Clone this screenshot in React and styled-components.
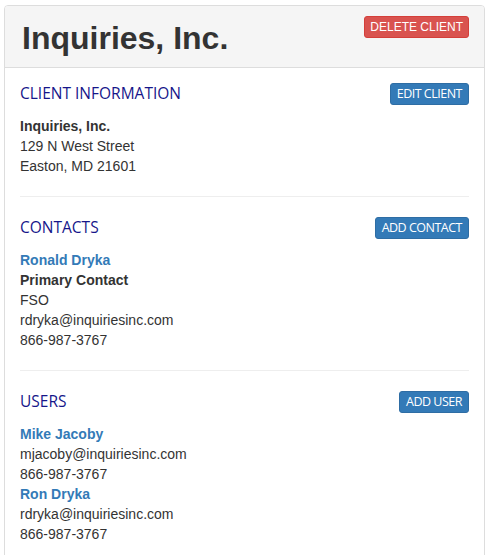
import styled, { createGlobalStyle } from "styled-components";

const GlobalStyle = createGlobalStyle`
  html, body {
    margin: 0;
    padding: 0;
    overflow: hidden;
    background: #fff;
  }
  body {
    font-family: "Liberation Sans", Arial, sans-serif;
    font-size: 14px;
    line-height: 20px;
    color: #333;
  }
`;

const Panel = styled.div`
  margin: 5px 8px 0 4px;
  border: 1px solid #ddd;
  border-radius: 4px;
  background: #fff;
`;

const PanelHeading = styled.div`
  display: flex;
  justify-content: space-between;
  align-items: flex-start;
  padding: 10px 15px;
  background: #f5f5f5;
  border-bottom: 1px solid #ddd;
  border-radius: 3px 3px 0 0;
`;

const Title = styled.h1`
  margin: 6px 0 3px 2px;
  font-size: 32px;
  line-height: 32px;
  font-weight: bold;
  color: #333;
`;

const PanelBody = styled.div`
  padding: 15px;
`;

const SectionRow = styled.div`
  display: flex;
  justify-content: space-between;
  align-items: flex-start;
  margin-bottom: 11px;
`;

const SectionTitle = styled.h3`
  margin: 0;
  font-family: "Open Sans", "Noto Sans", sans-serif;
  font-weight: 400;
  font-size: 15.5px;
  line-height: 20px;
  color: #16168a;
`;

const Button = styled.button`
  font-family: ${(p) =>
    p.$danger ? `"Liberation Sans", Arial, sans-serif` : `"Open Sans", "Noto Sans", sans-serif`};
  font-size: ${(p) => (p.$danger ? "12px" : "12.5px")};
  line-height: 18px;
  letter-spacing: ${(p) => (p.$danger ? "0" : "-0.5px")};
  padding: 1px ${(p) => (p.$danger ? "5px" : "6px")};
  color: #fff;
  background: ${(p) => (p.$danger ? "#d9534f" : "#337ab7")};
  border: 1px solid ${(p) => (p.$danger ? "#d43f3a" : "#2e6da4")};
  border-radius: 3px;
  text-transform: uppercase;
  cursor: pointer;
  white-space: nowrap;
`;

const Lines = styled.div`
  display: flex;
  flex-direction: column;
`;

const Line = styled.div`
  font-weight: ${(p) => (p.$bold ? "bold" : "normal")};
`;

const NameLink = styled.a`
  font-weight: bold;
  color: #337ab7;
  text-decoration: none;
`;

const Divider = styled.hr`
  margin: 20px 0;
  border: 0;
  border-top: 1px solid #eee;
`;

const contacts = [
  {
    name: "Ronald Dryka",
    role: "Primary Contact",
    title: "FSO",
    email: "rdryka@inquiriesinc.com",
    phone: "866-987-3767",
  },
];

const users = [
  { name: "Mike Jacoby", email: "mjacoby@inquiriesinc.com", phone: "866-987-3767" },
  { name: "Ron Dryka", email: "rdryka@inquiriesinc.com", phone: "866-987-3767" },
];

export default function App() {
  return (
    <>
      <GlobalStyle />
      <Panel>
        <PanelHeading>
          <Title>Inquiries, Inc.</Title>
          <Button $danger>Delete Client</Button>
        </PanelHeading>
        <PanelBody>
          <SectionRow>
            <SectionTitle>CLIENT INFORMATION</SectionTitle>
            <Button>Edit Client</Button>
          </SectionRow>
          <Lines>
            <Line $bold>Inquiries, Inc.</Line>
            <Line>129 N West Street</Line>
            <Line>Easton, MD 21601</Line>
          </Lines>

          <Divider />

          <SectionRow>
            <SectionTitle>CONTACTS</SectionTitle>
            <Button>Add Contact</Button>
          </SectionRow>
          {contacts.map((c) => (
            <Lines key={c.email}>
              <NameLink href="#">{c.name}</NameLink>
              <Line $bold>{c.role}</Line>
              <Line>{c.title}</Line>
              <Line>{c.email}</Line>
              <Line>{c.phone}</Line>
            </Lines>
          ))}

          <Divider />

          <SectionRow>
            <SectionTitle>USERS</SectionTitle>
            <Button>Add User</Button>
          </SectionRow>
          {users.map((u) => (
            <Lines key={u.email}>
              <NameLink href="#">{u.name}</NameLink>
              <Line>{u.email}</Line>
              <Line>{u.phone}</Line>
            </Lines>
          ))}
        </PanelBody>
      </Panel>
    </>
  );
}
